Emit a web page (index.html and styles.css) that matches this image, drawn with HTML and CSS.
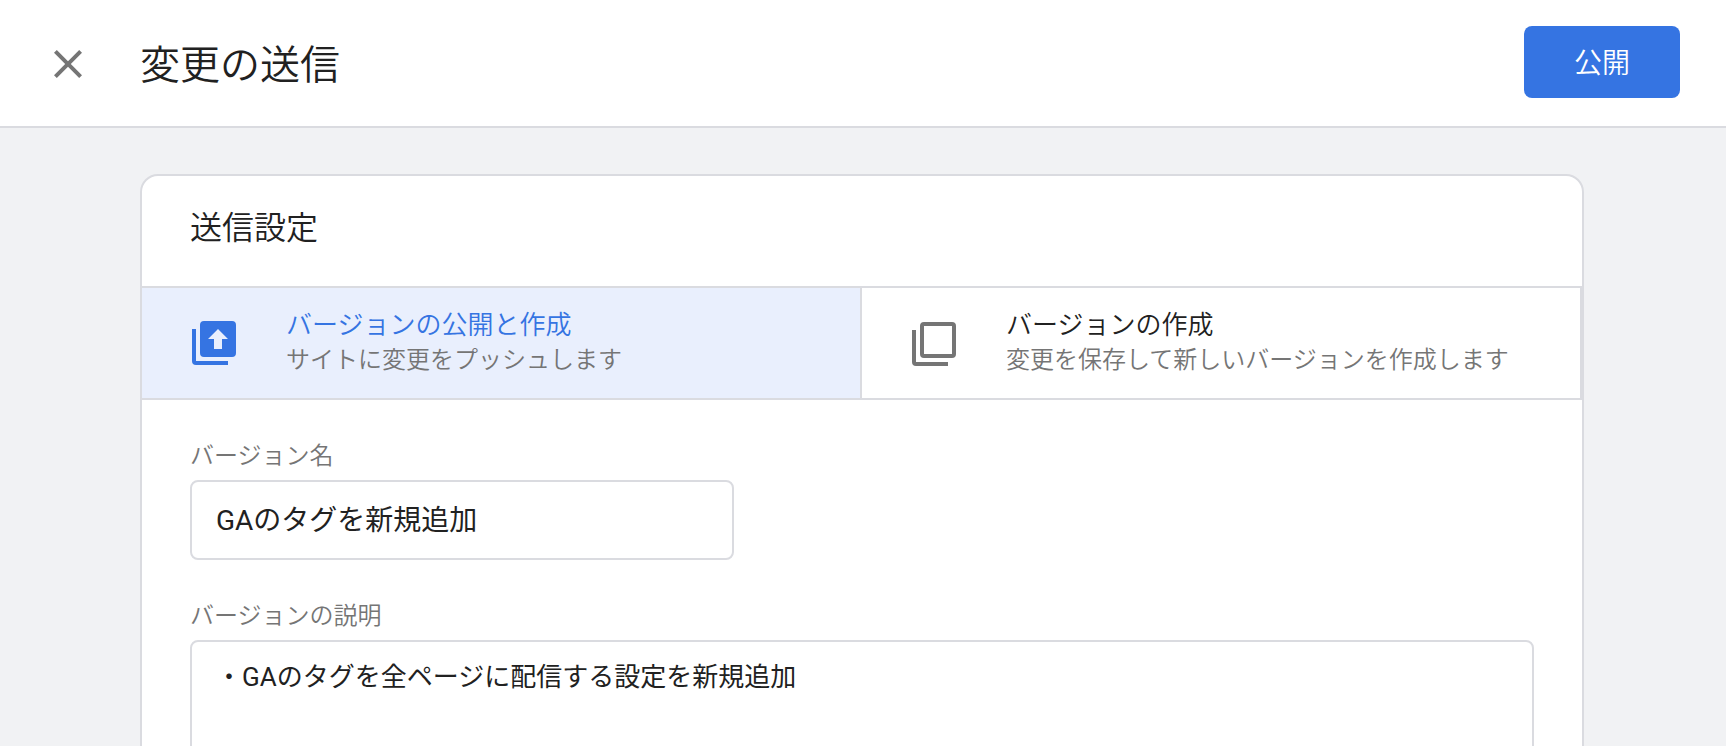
FILE: index.html
```
<!DOCTYPE html>
<html lang="ja">
<head>
    <meta charset="UTF-8">
    <meta name="viewport" content="width=device-width, initial-scale=1.0">
    <title>変更の送信</title>
    <link rel="stylesheet" href="styles.css">
</head>
<body>
    <header class="topbar">
        <button type="button" class="close" aria-label="閉じる">
            <svg class="icon" viewBox="0 0 24 24" aria-hidden="true">
                <path d="M19 6.41L17.59 5 12 10.59 6.41 5 5 6.41 10.59 12 5 17.59 6.41 19 12 13.41 17.59 19 19 17.59 13.41 12z"/>
            </svg>
        </button>
        <h1>変更の送信</h1>
        <button type="submit" form="submitForm" class="publish">公開</button>
    </header>

    <main>
        <form class="card" id="submitForm">
            <h2>送信設定</h2>

            <!-- 送信方法 -->
            <div class="choices">
                <button type="button" class="choice selected" aria-pressed="true">
                    <svg class="icon" viewBox="0 0 48 48" aria-hidden="true">
                        <path d="M6 10H2v32a4 4 0 0 0 4 4h32v-4H6z"/>
                        <path fill-rule="evenodd" d="M14 2h28a4 4 0 0 1 4 4v28a4 4 0 0 1-4 4H14a4 4 0 0 1-4-4V6a4 4 0 0 1 4-4zM28 10L18 20h6v10h8V20h6z"/>
                    </svg>
                    <span class="choice-text">
                        <span class="choice-title">バージョンの公開と作成</span>
                        <span class="choice-note">サイトに変更をプッシュします</span>
                    </span>
                </button>
                <button type="button" class="choice" aria-pressed="false">
                    <svg class="icon" viewBox="0 0 48 48" aria-hidden="true">
                        <path d="M6 11H2v32a4 4 0 0 0 4 4h32v-4H6z"/>
                        <path fill-rule="evenodd" d="M14 3h28a4 4 0 0 1 4 4v28a4 4 0 0 1-4 4H14a4 4 0 0 1-4-4V7a4 4 0 0 1 4-4zM14 7v28h28V7z"/>
                    </svg>
                    <span class="choice-text">
                        <span class="choice-title">バージョンの作成</span>
                        <span class="choice-note">変更を保存して新しいバージョンを作成します</span>
                    </span>
                </button>
            </div>

            <!-- バージョンの情報 -->
            <div class="fields">
                <div class="field">
                    <label for="versionName">バージョン名</label>
                    <input type="text" id="versionName" value="GAのタグを新規追加">
                </div>
                <div class="field">
                    <label for="versionNote">バージョンの説明</label>
                    <textarea id="versionNote" rows="5">・GAのタグを全ページに配信する設定を新規追加</textarea>
                </div>
            </div>
        </form>
    </main>
</body>
</html>
```
FILE: styles.css
```
* {
    box-sizing: border-box;
}
html {
    height: 100%;
}
body {
    display: flex;
    flex-direction: column;
    height: 100%;
    margin: 0;
    overflow: hidden;
    background: #f1f2f4;
    color: #212121;
    font-family: Roboto, 'Noto Sans CJK JP', sans-serif;
    font-weight: 350;
}
button, input, textarea {
    font: inherit;
    color: inherit;
}
button {
    padding: 0;
    border: none;
    background: none;
    cursor: pointer;
}
.icon {
    display: block;
    flex: none;
    width: 48px;
    height: 48px;
    fill: #757575;
}
.topbar {
    display: flex;
    flex: none;
    align-items: center;
    gap: 48px;
    padding: 26px 46px 28px 44px;
    border-bottom: 2px solid #dadbe0;
    background: #fff;
}
.close {
    padding-top: 4px;
}
h1 {
    flex: 1;
    margin: 0;
    padding-top: 8px;
    font-size: 40px;
    font-weight: 350;
    line-height: 48px;
}
.publish {
    padding: 20px 50px 16px;
    border-radius: 8px;
    background: #3574e2;
    color: #fff;
    font-size: 28px;
    line-height: 36px;
}
main {
    flex: 1;
    min-height: 0;
    padding: 46px 142px 48px 140px;
    overflow: hidden;
}
.card {
    border: 2px solid #dadbe0;
    border-radius: 18px;
    background: #fff;
}
h2 {
    margin: 0;
    padding: 28px 48px 34px;
    font-size: 32px;
    font-weight: 350;
    line-height: 48px;
}
.choices {
    display: grid;
    grid-template-columns: 1fr 1fr;
    border-top: 2px solid #dadbe0;
    border-bottom: 2px solid #dadbe0;
}
.choice {
    display: flex;
    align-items: center;
    gap: 48px;
    padding: 20px 48px;
    border-right: 2px solid #dadbe0;
    text-align: left;
}
.choice-title, .choice-note {
    display: block;
    line-height: 35px;
}
.choice-title {
    font-size: 26px;
}
.choice-note {
    color: #757575;
    font-size: 24px;
}
.selected {
    background: #e9effd;
}
.selected .icon {
    fill: #3574e2;
}
.selected .choice-title {
    color: #3574e2;
}
.fields {
    display: flex;
    flex-direction: column;
    gap: 38px;
    padding: 38px 48px 48px;
}
.field {
    display: flex;
    flex-direction: column;
    gap: 6px;
}
label {
    color: #757575;
    font-size: 24px;
    line-height: 36px;
}
input, textarea {
    border: 2px solid #dadbe0;
    border-radius: 8px;
    background: #fff;
    font-weight: 400;
    outline: none;
}
input {
    width: 544px;
    max-width: 100%;
    padding: 21px 24px 19px;
    font-size: 28px;
    line-height: 36px;
}
textarea {
    width: 100%;
    padding: 17px 24px;
    font-size: 26px;
    line-height: 36px;
    resize: none;
}
```
